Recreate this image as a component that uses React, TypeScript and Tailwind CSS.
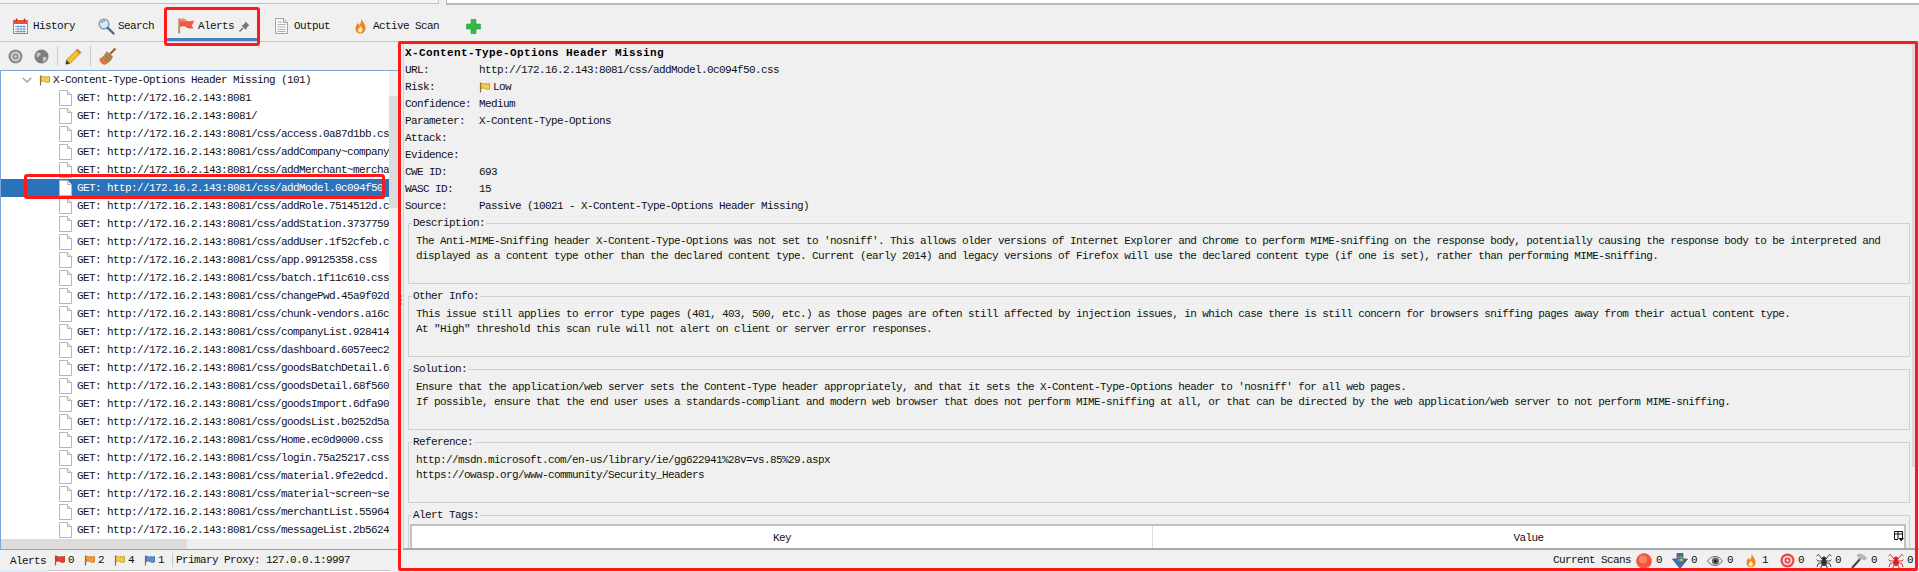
import type { ReactNode } from "react";

const base = "http://172.16.2.143:8081";
const treeRows = [
    "", "/", "/css/access.0a87d1bb.cs", "/css/addCompany~company", "/css/addMerchant~mercha",
    "/css/addModel.0c094f50", "/css/addRole.7514512d.c", "/css/addStation.3737759", "/css/addUser.1f52cfeb.c",
    "/css/app.99125358.css", "/css/batch.1f11c610.css", "/css/changePwd.45a9f02d", "/css/chunk-vendors.a16c",
    "/css/companyList.928414", "/css/dashboard.6057eec2", "/css/goodsBatchDetail.6", "/css/goodsDetail.68f560",
    "/css/goodsImport.6dfa90", "/css/goodsList.b0252d5a", "/css/Home.ec0d9000.css", "/css/login.75a25217.css",
    "/css/material.9fe2edcd.", "/css/material~screen~se", "/css/merchantList.55964", "/css/messageList.2b5624",
];

const sections = [
    {
        title: "Description:",
        lines: [
            "The Anti-MIME-Sniffing header X-Content-Type-Options was not set to 'nosniff'. This allows older versions of Internet Explorer and Chrome to perform MIME-sniffing on the response body, potentially causing the response body to be interpreted and",
            "displayed as a content type other than the declared content type. Current (early 2014) and legacy versions of Firefox will use the declared content type (if one is set), rather than performing MIME-sniffing.",
        ],
    },
    {
        title: "Other Info:",
        lines: [
            "This issue still applies to error type pages (401, 403, 500, etc.) as those pages are often still affected by injection issues, in which case there is still concern for browsers sniffing pages away from their actual content type.",
            'At "High" threshold this scan rule will not alert on client or server error responses.',
        ],
    },
    {
        title: "Solution:",
        lines: [
            "Ensure that the application/web server sets the Content-Type header appropriately, and that it sets the X-Content-Type-Options header to 'nosniff' for all web pages.",
            "If possible, ensure that the end user uses a standards-compliant and modern web browser that does not perform MIME-sniffing at all, or that can be directed by the web application/web server to not perform MIME-sniffing.",
        ],
    },
    {
        title: "Reference:",
        lines: ["http://msdn.microsoft.com/en-us/library/ie/gg622941%28v=vs.85%29.aspx", "https://owasp.org/www-community/Security_Headers"],
    },
];

function Flag({ color, edge }: { color: string; edge: string }) {
    return (
        <svg width="11" height="11" viewBox="0 0 11 11" className="shrink-0">
            <path d="M1.5 0.5V10.5" stroke="#8a6a3a" strokeWidth="1.2" />
            <path d="M2 1.5C4 0.5 5 2.5 6.5 2.5L6.5 1.5C8 2 9 2 10.5 1.5V7C9 7.5 8 7.5 6.5 7V6.5C5 6.5 4 5.5 2 6.5Z" fill={color} stroke={edge} strokeWidth="0.8" />
        </svg>
    );
}

function PageIcon() {
    return (
        <svg width="13" height="16" viewBox="0 0 13 16" className="shrink-0">
            <path d="M0.5 0.5H8.5L12.5 4.5V15.5H0.5Z" fill="#fff" stroke="#b4b8b4" />
            <path d="M8.5 0.5V4.5H12.5" fill="#e4e8e4" stroke="#b4b8b4" />
        </svg>
    );
}

function CalendarIcon() {
    return (
        <svg width="15" height="16" viewBox="0 0 15 16">
            <rect x="0.5" y="2.5" width="14" height="13" fill="#fff" stroke="#7a8ea0" />
            <rect x="1" y="2" width="13" height="4" fill="#e8503e" />
            <path d="M3.5 0.5V3.5M11.5 0.5V3.5" stroke="#b03020" strokeWidth="1.4" />
            <path d="M2 8.5H13M2 11H13M2 13.5H13M5 7V15M8 7V15M11 7V15" stroke="#5b8fc4" strokeWidth="0.8" />
        </svg>
    );
}

function SearchIcon() {
    return (
        <svg width="17" height="17" viewBox="0 0 17 17">
            <circle cx="6" cy="6" r="4.8" fill="#d5ecf8" stroke="#8a98a4" strokeWidth="1.4" />
            <path d="M3.5 5C4 3.5 5.5 3 7 3.2" stroke="#5aa7dd" strokeWidth="1.4" fill="none" />
            <path d="M9.8 9.8L15.5 15.5" stroke="#3a6ea8" strokeWidth="2.4" strokeLinecap="round" />
        </svg>
    );
}

function BigFlag() {
    return (
        <svg width="16" height="16" viewBox="0 0 16 16">
            <path d="M1.2 0.5V15.5" stroke="#b08f68" strokeWidth="1.8" />
            <path d="M2 1C4.5 0.3 6.5 1 8.5 2V3C10.5 3.6 13 3.4 15.8 2.6C15.6 5 14.6 6.6 13.6 7.8C14.4 8.6 15 9.4 15.6 10.2C13 10.8 10.5 10.6 8.5 9.8L8 8.8C6 8.2 4 8.2 2 9Z" fill="#f25540" />
            <path d="M2 1C4.5 0.3 6.5 1 8 1.8V4C6 3.2 4 3.2 2 3.8Z" fill="#f98a74" />
        </svg>
    );
}

function PinIcon() {
    return (
        <svg width="11" height="11" viewBox="0 0 11 11">
            <path d="M6.5 0.5L10.5 4.5L9 5L7.5 7.5L7 9L2.5 4.5L4 4L6 2Z" fill="#777" />
            <path d="M4 7L0.5 10.5" stroke="#666" strokeWidth="1.2" />
        </svg>
    );
}

function OutputIcon() {
    return (
        <svg width="13" height="16" viewBox="0 0 13 16">
            <path d="M0.5 0.5H8.5L12.5 4.5V15.5H0.5Z" fill="#fafafa" stroke="#a0a4a4" />
            <path d="M8.5 0.5V4.5H12.5" fill="#ddd" stroke="#a0a4a4" />
            <path d="M2.5 4H7M2.5 6.5H10.5M2.5 9H10.5M2.5 11.5H10.5M2.5 13.5H10.5" stroke="#9aa0a0" strokeWidth="0.8" />
        </svg>
    );
}

function FlameIcon({ w = 11, h = 16 }: { w?: number; h?: number }) {
    return (
        <svg width={w} height={h} viewBox="0 0 11 16">
            <path d="M6 0.5C7 3 10.5 5.5 10.5 10C10.5 13.5 8 15.5 5.5 15.5C2.5 15.5 0.5 13.5 0.5 10.5C0.5 8 2 7 2.5 5C3.5 5.5 4 6.5 4 7.5C5.5 6 6.5 3.5 6 0.5Z" fill="#f08420" />
            <path d="M5.5 8C6.5 9.5 7.5 10.5 7.5 12C7.5 13.5 6.5 14.5 5.5 14.5C4 14.5 3 13.5 3 12C3 10.5 5 10 5.5 8Z" fill="#fff2b0" />
        </svg>
    );
}

function PlusIcon() {
    return (
        <svg width="15" height="15" viewBox="0 0 15 15">
            <path d="M5 0.5H10V5H14.5V10H10V14.5H5V10H0.5V5H5Z" fill="#35b84a" stroke="#2a9a3c" strokeWidth="0.6" />
        </svg>
    );
}

function TargetIcon({ ring, fill }: { ring: string; fill: string }) {
    return (
        <svg width="15" height="15" viewBox="0 0 15 15">
            <circle cx="7.5" cy="7.5" r="7" fill={ring} />
            <circle cx="7.5" cy="7.5" r="4.8" fill={fill} />
            <circle cx="7.5" cy="7.5" r="3" fill={ring} />
            <circle cx="7.5" cy="7.5" r="1.3" fill={fill} />
        </svg>
    );
}

function GlobeIcon() {
    return (
        <svg width="15" height="15" viewBox="0 0 15 15">
            <circle cx="7.5" cy="7.5" r="7" fill="#7d7d7d" />
            <path d="M3 4C5 3 6 4 7 5C6 7 4 7 3.5 9C2.5 7.5 2 5.5 3 4ZM9 8C11 7.5 12.5 8 13 9C12 11.5 10.5 12.5 9.5 13C9 11 8 10 9 8Z" fill="#c4c4c4" />
        </svg>
    );
}

function PencilIcon() {
    return (
        <svg width="17" height="17" viewBox="0 0 17 17">
            <path d="M12.5 1L16 4.5L5 15.5L0.8 16.2L1.5 12Z" fill="#f5c22b" stroke="#a87a10" strokeWidth="0.7" />
            <path d="M12.5 1L16 4.5L14.5 6L11 2.5Z" fill="#e8705a" />
            <path d="M1.5 12L5 15.5L0.8 16.2Z" fill="#3a3a3a" />
        </svg>
    );
}

function BroomIcon() {
    return (
        <svg width="17" height="17" viewBox="0 0 17 17">
            <path d="M16.5 0.5L11 6" stroke="#8a6030" strokeWidth="2" />
            <path d="M7.5 3L14 8.5C13 12 10.5 15 6 16.5C3.5 16.5 1 14.5 0.5 11C3.5 9.5 6 6.5 7.5 3Z" fill="#b98a4a" />
            <path d="M0.5 11C1 14.5 3.5 16.5 6 16.5L8 15.5L2.5 10Z" fill="#e8703a" />
            <path d="M4.5 10L9 14M6.5 7.5L11 12M8.5 5.5L12.5 9.5" stroke="#7a5a30" strokeWidth="0.8" />
        </svg>
    );
}

function TableMenuIcon() {
    return (
        <svg width="10" height="11" viewBox="0 0 10 11">
            <path d="M0.5 0.5H8.5V7.5M0.5 0.5V8.5H4M0.5 3H8.5M4 0.5V8" stroke="#111" fill="none" />
            <path d="M4.5 7H10L7.2 10.5Z" fill="#111" />
        </svg>
    );
}

function BurstIcon() {
    return (
        <svg width="16" height="16" viewBox="0 0 16 16">
            <circle cx="8" cy="8" r="7.6" fill="#f5563a" strokeDasharray="1.6 1.4" stroke="#e8452c" strokeWidth="0.8" />
            <circle cx="7" cy="6.5" r="4" fill="#f98566" />
        </svg>
    );
}

function ShieldIcon() {
    return (
        <svg width="16" height="16" viewBox="0 0 16 16">
            <path d="M5 0.5H11V6H15.5L8 15.5L0.5 6H5Z" fill="#3f6fb0" stroke="#24497e" strokeWidth="0.7" />
            <rect x="5.5" y="3" width="2.4" height="2.4" fill="#e5523a" />
            <rect x="8.3" y="3" width="2.4" height="2.4" fill="#5bb544" />
            <rect x="5.5" y="5.8" width="2.4" height="2.4" fill="#4a9ae0" />
            <rect x="8.3" y="5.8" width="2.4" height="2.4" fill="#f3c32c" />
        </svg>
    );
}

function EyeIcon() {
    return (
        <svg width="16" height="10" viewBox="0 0 16 10">
            <path d="M0.5 5C3 1.5 5.5 0.5 8 0.5C10.5 0.5 13 1.5 15.5 5C13 8.5 10.5 9.5 8 9.5C5.5 9.5 3 8.5 0.5 5Z" fill="#eee" stroke="#666" />
            <circle cx="8.5" cy="5" r="3.6" fill="#666" />
            <circle cx="8.5" cy="5" r="1.6" fill="#222" />
        </svg>
    );
}

function SpiderIcon({ color }: { color: string }) {
    return (
        <svg width="16" height="16" viewBox="0 0 16 16">
            <path d="M6 6L2.5 1.5L0.5 3M10 6L13.5 1.5L15.5 3M5.5 8H2L0.5 6.5M10.5 8H14L15.5 6.5M5.5 9.5L2 11L1 14M10.5 9.5L14 11L15 14M6.5 11L4.5 15.5M9.5 11L11.5 15.5" stroke={color} fill="none" strokeWidth="0.9" />
            <ellipse cx="8" cy="5.5" rx="2.2" ry="2" fill={color} />
            <ellipse cx="8" cy="9.5" rx="2.8" ry="3.4" fill={color} />
        </svg>
    );
}

function HammerIcon() {
    return (
        <svg width="16" height="16" viewBox="0 0 16 16">
            <path d="M9.5 5.5L1 15" stroke="#444" strokeWidth="2" />
            <path d="M6 2.5C8 0.5 11 0.5 15.5 5L13.5 7L11 5.5L9.5 7L7.5 5L8.5 3.5C7.5 3 7 2.8 6 2.5Z" fill="#bbb" stroke="#888" strokeWidth="0.6" />
        </svg>
    );
}

function Tab({ icon, label, className, active }: { icon: ReactNode; label?: string; className: string; active?: boolean }) {
    return (
        <div className={`flex h-full items-center gap-[5px] border-b-[3px] pt-[9px] ${active ? "border-[#4a7fc1]" : "border-transparent"} ${className}`}>
            {icon}
            {label && <span>{label}</span>}
            {active && <span className="ml-[1px] flex"><PinIcon /></span>}
        </div>
    );
}

function ToolSep() {
    return <div className="h-[20px] w-px bg-[#c8c8c8]" />;
}

function Section({ title, lines }: { title: string; lines: string[] }) {
    return (
        <fieldset className="mt-[6px] h-[67px] shrink-0 border border-[#d0d0d0] pl-[7px] pt-[5px] first:mt-[2px]">
            <legend className="-ml-[4px] px-[1px] leading-[12px]">{title}</legend>
            {lines.map((line) => (
                <div key={line} className="whitespace-nowrap leading-[15px]">{line}</div>
            ))}
        </fieldset>
    );
}

function Field({ label, children }: { label: string; children?: ReactNode }) {
    return (
        <div className="flex h-[17px] items-center pl-[1px]">
            <span className="w-[74px] shrink-0">{label}</span>
            {children}
        </div>
    );
}

function ScanCount({ icon, count, className }: { icon: ReactNode; count: number; className: string }) {
    return (
        <div className={`flex items-center justify-between ${className}`}>
            {icon}
            <span className="w-[6px]">{count}</span>
        </div>
    );
}

export default function App() {
    return (
        <div className="relative flex h-[572px] w-[1919px] flex-col overflow-hidden bg-[#f0f0f0] font-['Liberation_Mono',monospace] text-[11px] tracking-[-0.6px] text-[#111]">
            {/* split pane remains at the very top */}
            <div className="flex h-[5px] shrink-0 items-start">
                <div className="h-[4px] w-[439px] border-b border-r border-[#c4c4c4] bg-[#f4f4f4]" />
                <div className="ml-[7px] h-[5px] flex-1 border-b-2 border-l border-[#b8b8b8] bg-white" />
            </div>

            <div className="flex h-[37px] shrink-0 items-center border-b border-[#c8c8c8]">
                <Tab icon={<CalendarIcon />} label="History" className="w-[88px] pl-[13px]" />
                <Tab icon={<SearchIcon />} label="Search" className="w-[79px] pl-[10px] !gap-[3px]" />
                <Tab icon={<BigFlag />} label="Alerts" className="w-[93px] pl-[11px] !gap-[4px]" active />
                <Tab icon={<OutputIcon />} label="Output" className="w-[85px] pl-[15px] !gap-[6px]" />
                <Tab icon={<FlameIcon />} label="Active Scan" className="w-[121px] pl-[10px] !gap-[7px]" />
                <Tab icon={<PlusIcon />} className="pl-0" />
            </div>

            <div className="flex h-[528px] shrink-0">
                <div className="flex w-[399px] shrink-0 flex-col">
                    <div className="flex h-[28px] shrink-0 items-center pl-[8px]">
                        <TargetIcon ring="#8c8c8c" fill="#d4d4d4" />
                        <div className="ml-[11px]"><GlobeIcon /></div>
                        <div className="ml-[8px]"><ToolSep /></div>
                        <div className="ml-[7px]"><PencilIcon /></div>
                        <div className="ml-[8px]"><ToolSep /></div>
                        <div className="ml-[8px]"><BroomIcon /></div>
                    </div>

                    <div className="flex h-[480px] shrink-0 flex-col border-y border-l border-[#7da6d6] bg-white">
                        <div className="flex h-[468px] shrink-0">
                            <div className="w-[388px] shrink-0 overflow-hidden">
                                <div className="flex h-[18px] items-center whitespace-nowrap">
                                    <svg width="10" height="6" viewBox="0 0 10 6" className="ml-[21px]">
                                        <path d="M0.7 0.7L5 5L9.3 0.7" stroke="#a8a8a8" strokeWidth="1.6" fill="none" />
                                    </svg>
                                    <span className="ml-[7px] mr-[3px] flex"><Flag color="#f6d04a" edge="#b88a1e" /></span>
                                    <span>X-Content-Type-Options Header Missing (101)</span>
                                </div>
                                {treeRows.map((path, i) => (
                                    <div key={path} className={`flex h-[18px] items-center whitespace-nowrap pl-[58px] ${i === 5 ? "bg-[#2a72bb] text-white" : ""}`}>
                                        <PageIcon />
                                        <span className="ml-[5px]">GET: {base}{path}</span>
                                    </div>
                                ))}
                            </div>
                            <div className="w-[10px] shrink-0 bg-[#f0f0f0] pt-[25px]">
                                <div className="h-[112px] bg-[#dcdcdc]" />
                            </div>
                        </div>
                        <div className="h-[10px] shrink-0 bg-[#f0f0f0]">
                            <div className="h-full w-[186px] bg-[#dcdcdc]" />
                        </div>
                    </div>

                    <div className="flex h-[20px] shrink-0 items-center pl-[10px]">
                        <span className="mt-[3px] w-[44px]">Alerts</span>
                        <div className="flex w-[30px] items-center gap-[3px]"><Flag color="#e8402c" edge="#b82a1a" />0</div>
                        <div className="flex w-[30px] items-center gap-[3px]"><Flag color="#f39c2c" edge="#c0761a" />2</div>
                        <div className="flex w-[30px] items-center gap-[3px]"><Flag color="#f3ce3c" edge="#b8961e" />4</div>
                        <div className="flex w-[28px] items-center gap-[3px]"><Flag color="#5a90d0" edge="#3a6aa8" />1</div>
                        <div className="h-[14px] w-px bg-[#c8c8c8]" />
                        <span className="ml-[3px] whitespace-nowrap">Primary Proxy: 127.0.0.1:9997</span>
                    </div>
                </div>

                <div className="flex w-[4px] shrink-0 flex-col items-center justify-center gap-[2px] pb-[12px]">
                    <div className="h-[2px] w-[2px] bg-[#b0b0b0]" />
                    <div className="h-[2px] w-[2px] bg-[#b0b0b0]" />
                    <div className="h-[2px] w-[2px] bg-[#b0b0b0]" />
                </div>

                <div className="flex min-w-0 flex-1 flex-col">
                    <div className="flex h-[508px] shrink-0 overflow-hidden border-b-2 border-[#a8a8a8]">
                        <div className="min-w-0 flex-1 overflow-hidden border-l border-[#d4d4d4] pt-[3px]">
                            <Field label="">
                                <span className="-ml-[74px] whitespace-nowrap font-bold tracking-[0.4px] text-black">X-Content-Type-Options Header Missing</span>
                            </Field>
                            <Field label="URL:">http://172.16.2.143:8081/css/addModel.0c094f50.css</Field>
                            <Field label="Risk:">
                                <span className="mr-[3px] flex"><Flag color="#f6d04a" edge="#b88a1e" /></span>Low
                            </Field>
                            <Field label="Confidence:">Medium</Field>
                            <Field label="Parameter:">X-Content-Type-Options</Field>
                            <Field label="Attack:" />
                            <Field label="Evidence:" />
                            <Field label="CWE ID:">693</Field>
                            <Field label="WASC ID:">15</Field>
                            <Field label="Source:">Passive (10021 - X-Content-Type-Options Header Missing)</Field>

                            <div className="ml-[4px] mr-[2px] flex flex-col">
                                {sections.map((s) => (
                                    <Section key={s.title} title={s.title} lines={s.lines} />
                                ))}
                                <fieldset className="mt-[6px] h-[60px] shrink-0 border border-b-0 border-[#d0d0d0] pl-[1px] pr-[3px] pt-[3px]">
                                    <legend className="ml-[2px] px-[1px] leading-[12px]">Alert Tags:</legend>
                                    <div className="relative grid h-[40px] grid-cols-[741px_1fr] border-2 border-[#c0c0c0] bg-white">
                                        <div className="border-r border-[#dcdcdc] pt-[4px] text-center">Key</div>
                                        <div className="pt-[4px] text-center">Value</div>
                                        <div className="absolute right-0 top-[5px]"><TableMenuIcon /></div>
                                    </div>
                                </fieldset>
                            </div>
                        </div>
                        <div className="w-[7px] shrink-0 bg-[#f0f0f0]">
                            <div className="h-[425px] bg-[#dcdcdc]" />
                        </div>
                    </div>

                    <div className="flex h-[20px] shrink-0 items-center justify-end pr-[6px] pt-[1px]">
                        <span className="mr-[5px]">Current Scans</span>
                        <ScanCount icon={<BurstIcon />} count={0} className="w-[26px]" />
                        <ScanCount icon={<ShieldIcon />} count={0} className="w-[25px] ml-[10px]" />
                        <ScanCount icon={<EyeIcon />} count={0} className="w-[26px] ml-[10px]" />
                        <ScanCount icon={<FlameIcon w={10} h={15} />} count={1} className="w-[22px] ml-[13px]" />
                        <ScanCount icon={<TargetIcon ring="#e5484d" fill="#f8d8d8" />} count={0} className="w-[24px] ml-[12px]" />
                        <ScanCount icon={<SpiderIcon color="#333" />} count={0} className="w-[25px] ml-[12px]" />
                        <ScanCount icon={<HammerIcon />} count={0} className="w-[26px] ml-[10px]" />
                        <ScanCount icon={<SpiderIcon color="#d8222a" />} count={0} className="w-[25px] ml-[11px]" />
                    </div>
                </div>
            </div>

            <div className="flex h-[2px] shrink-0">
                <div className="w-[48px] bg-[#dcebf7]" />
                <div className="w-[342px] border-t border-[#c8c8c8] bg-white" />
            </div>

            {/* red markers drawn over the screenshot */}
            <div className="absolute left-[164px] top-[7px] h-[39px] w-[96px] rounded-[3px] border-[3px] border-[#ff1a1a]" />
            <div className="absolute left-[24px] top-[174px] h-[25px] w-[361px] rounded-[3px] border-[3px] border-[#ff1a1a]" />
            <div className="absolute left-[398px] top-[41px] h-[530px] w-[1520px] rounded-[2px] border-[3px] border-[#ff1a1a]" />
        </div>
    );
}
